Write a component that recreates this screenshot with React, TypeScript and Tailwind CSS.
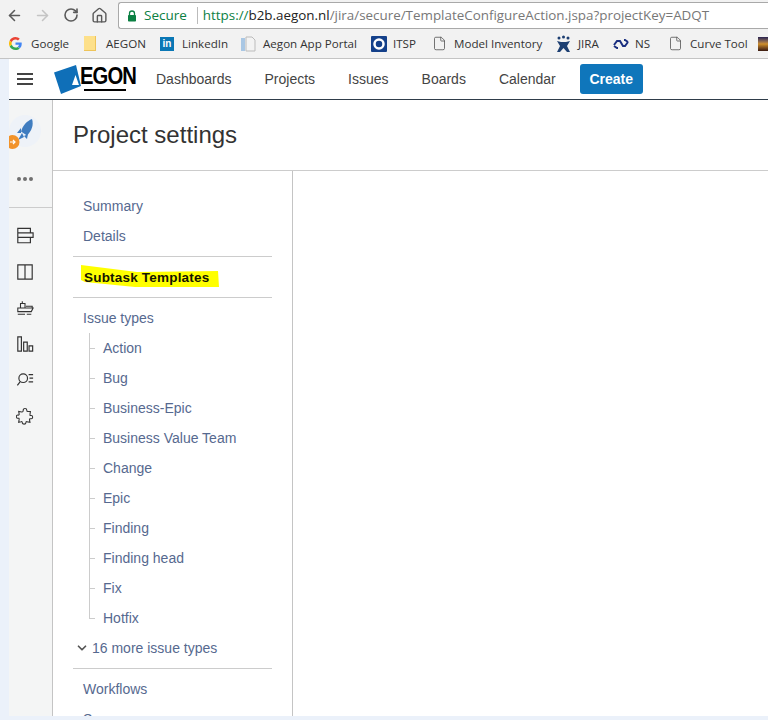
import { ArrowLeft, ArrowRight, RotateCw, Home, File, ChevronDown } from 'lucide-react';

const navLinks = ['Dashboards', 'Projects', 'Issues', 'Boards', 'Calendar'];
const issueTypes = ['Action', 'Bug', 'Business-Epic', 'Business Value Team', 'Change', 'Epic', 'Finding', 'Finding head', 'Fix', 'Hotfix'];

function GoogleIcon() {
  return (
    <svg width="13" height="13" viewBox="0 0 48 48">
      <path fill="#ea4335" d="M24 9.5c3.9 0 6.9 1.6 9 3.6l6.7-6.6C35.700 2.800 30.300 0 24 0 14.600 0 6.600 5.400 2.600 13.200l7.800 6.100C12.300 13.500 17.700 9.500 24 9.500z" />
      <path fill="#4285f4" d="M47 24.500c0-1.700-.2-3.300-.4-4.500H24v9h13c-.6 3-2.200 5.400-4.800 7.100l7.500 5.800C44.300 37.700 47 31.700 47 24.500z" />
      <path fill="#fbbc05" d="M10.400 28.700A14.500 14.500 0 0 1 10.400 19.300L2.600 13.200a24 24 0 0 0 0 21.600z" />
      <path fill="#34a853" d="M24 48c6.300 0 11.700-2.100 15.700-5.700l-7.500-5.800c-2.100 1.400-4.800 2.300-8.200 2.300-6.300 0-11.700-4-13.600-9.800l-7.800 6C6.600 42.600 14.600 48 24 48z" />
    </svg>
  );
}

function DocIcon() {
  return <File size={15} strokeWidth={1.3} className="text-[#555]" />;
}

function Bookmark({ icon, label, width }: { icon: React.ReactNode; label: string; width: number }) {
  return (
    <div className="flex items-center shrink-0" style={{ width }}>
      <div className="w-[22px] flex items-center">{icon}</div>
      <span className="whitespace-nowrap">{label}</span>
    </div>
  );
}

function BrowserChrome() {
  return (
    <div className="bg-[#f2f2f2] font-['Open_Sans',sans-serif]">
      <div className="h-[30px] flex items-center pl-[6px] text-[#5a5a5a]">
        <ArrowLeft size={17} strokeWidth={2.2} />
        <ArrowRight size={17} strokeWidth={2.2} className="ml-[11px] text-[#c4c4c4]" />
        <RotateCw size={16} strokeWidth={2.4} className="ml-[12px]" />
        <Home size={17} strokeWidth={2} className="ml-[12px]" />
        <div className="ml-[10px] flex-1 h-[27px] mt-[1px] bg-white border border-[#a9a9a9] border-r-0 rounded-l-[3px] flex items-center pl-[8px] text-[14px] whitespace-nowrap overflow-hidden">
          <svg width="10" height="12" viewBox="0 0 10 12" className="shrink-0">
            <path d="M2.500 5V3.500a2.500 2.500 0 0 1 5 0V5" fill="none" stroke="#0b8043" strokeWidth="1.300" />
            <rect x="1" y="5" width="8" height="6.500" rx="0.800" fill="#0b8043" />
          </svg>
          <span className="ml-[7px] text-[#0b8043] text-[13.5px]">Secure</span>
          <span className="ml-[10px] w-px h-[17px] bg-[#bbb]" />
          <span className="ml-[5px] text-[13.4px] text-[#777]">
            <span className="text-[#0b8043]">https://</span>
            <span className="text-[#222]">b2b.aegon.nl</span>
            /jira/secure/TemplateConfigureAction.jspa?projectKey=ADQT
          </span>
        </div>
      </div>
      <div className="h-[29px] flex items-center pl-[9px] text-[11.6px] text-[#333] border-b border-[#c4c4c4] overflow-hidden">
        <Bookmark width={75} label="Google" icon={<GoogleIcon />} />
        <Bookmark
          width={76}
          label="AEGON"
          icon={<div className="w-[12px] h-[15px] bg-[#fde08a] border-r border-b border-[#eec45a]" />}
        />
        <Bookmark
          width={81}
          label="LinkedIn"
          icon={<div className="w-[14px] h-[14px] bg-[#0a77b5] text-white text-[10px] font-bold leading-[14px] text-center font-['Liberation_Sans',sans-serif]">in</div>}
        />
        <Bookmark
          width={130}
          label="Aegon App Portal"
          icon={
            <svg width="15" height="16" viewBox="0 0 15 16">
              <rect x="0" y="2" width="4" height="13" fill="#a9c7e4" />
              <path d="M5 1h6l3 3v11H5z" fill="#f3f3f3" stroke="#bbb" />
            </svg>
          }
        />
        <Bookmark
          width={61}
          label="ITSP"
          icon={
            <svg width="16" height="16" viewBox="0 0 16 16">
              <rect width="16" height="16" rx="1" fill="#14408a" />
              <circle cx="8" cy="8" r="4.500" fill="none" stroke="#fff" strokeWidth="2.500" />
            </svg>
          }
        />
        <Bookmark width={124} label="Model Inventory" icon={<DocIcon />} />
        <Bookmark
          width={57}
          label="JIRA"
          icon={
            <svg width="15" height="18" viewBox="0 0 15 18" fill="#1d3f72">
              <circle cx="3" cy="3" r="1.500" />
              <circle cx="7.500" cy="2" r="1.500" />
              <circle cx="12" cy="3" r="1.500" />
              <path d="M1 6l4 1h5l4-1-3 5 3 6h-3l-3.500-4L4 17H1l3-6z" />
            </svg>
          }
        />
        <Bookmark
          width={55}
          label="NS"
          icon={
            <svg width="16" height="10" viewBox="0 0 16 10" fill="none" stroke="#1a2f80" strokeWidth="2">
              <path d="M1 6l3-4h3l3 5h2l3-4" />
              <path d="M1 7l3 2h1M15 3l-3-2h-1" />
            </svg>
          }
        />
        <Bookmark width={90} label="Curve Tool" icon={<DocIcon />} />
        <div className="w-[14px] h-[14px] shrink-0 bg-gradient-to-b from-[#2a2250] via-[#d0902a] to-[#3a1a10]" />
      </div>
    </div>
  );
}

function JiraHeader() {
  return (
    <div className="h-[41px] shrink-0 bg-white border-b border-[#2f3d4a] flex items-center font-['Liberation_Sans',sans-serif] text-[14px] text-[#444]">
      <div className="ml-[8px] w-[16px] flex flex-col gap-[3px]">
        <div className="h-[2px] bg-[#444]" />
        <div className="h-[2px] bg-[#444]" />
        <div className="h-[2px] bg-[#444]" />
      </div>
      <div className="relative ml-[21px] flex items-center w-[82px] h-[30px]">
        <svg width="28" height="30" viewBox="0 0 28 30" className="shrink-0">
          <path d="M0 8.500L22 1l5 21-20 8z" fill="#0f6fb8" />
          <path d="M18 21l3.500-10L25 21z" fill="#fff" />
        </svg>
        <span className="-ml-[2px] -mt-[6px] text-[23px] leading-none font-bold text-black tracking-[-1px] scale-x-[0.88] origin-left">EGON</span>
        <div className="absolute left-[30px] top-[25px] w-[42px] h-[2px] bg-black" />
      </div>
      <div className="ml-[20px] flex items-center gap-[33px]">
        {navLinks.map((link) => (
          <span key={link}>{link}</span>
        ))}
      </div>
      <button className="ml-[24px] w-[63px] h-[30px] rounded-[3px] bg-[#0f76bb] text-white font-bold">Create</button>
    </div>
  );
}

function Rail() {
  return (
    <div className="w-[44px] shrink-0 bg-[#f4f5f5] border-r border-[#c4c4c4] overflow-hidden">
      <div className="h-[108px] border-b border-[#ccc] flex flex-col pt-[15px]">
        <svg width="44" height="36" viewBox="0 0 44 36" className="shrink-0">
          <circle cx="16" cy="16" r="16" fill="#eef2f8" />
          <path d="M23 4c2 6-.5 12-5 16.500l-6-4C14 10 18 6 23 4z" fill="#3f7cc0" />
          <path d="M12 13l-4 5 4 0zM19 19l-1 5-3-3zM13 18l-4 7 6-3z" fill="#3f7cc0" />
          <circle cx="3.500" cy="27" r="7" fill="#f2932a" />
          <path d="M1 27h5M4 25l2 2-2 2" stroke="#fff" strokeWidth="1.200" fill="none" />
        </svg>
        <div className="mt-[26px] ml-[8px] flex gap-[2px]">
          <div className="w-[4px] h-[4px] rounded-full bg-[#707070]" />
          <div className="w-[4px] h-[4px] rounded-full bg-[#707070]" />
          <div className="w-[4px] h-[4px] rounded-full bg-[#707070]" />
        </div>
      </div>
      <div className="flex flex-col pl-[7px] pt-[19px] gap-[18px] text-[#333]">
        <svg width="18" height="18" viewBox="0 0 20 20" fill="none" stroke="currentColor" strokeWidth="1.300">
          <path d="M2 1.500h14v5H2zM2 6.500h17v5H2zM2 11.500h14v6H2z" />
        </svg>
        <svg width="18" height="18" viewBox="0 0 20 20" fill="none" stroke="currentColor" strokeWidth="1.300">
          <path d="M2 2h16v16H2zM10 2v16" />
        </svg>
        <svg width="18" height="18" viewBox="0 0 20 20" fill="none" stroke="currentColor" strokeWidth="1.200">
          <path d="M5 5h5v5H5zM7 5V2.500M2 10h17l-2 4H2zM2 17h8M12 17h5M11 8h7v2" />
        </svg>
        <svg width="18" height="18" viewBox="0 0 20 20" fill="none" stroke="currentColor" strokeWidth="1.300">
          <path d="M2 2h4v16H2zM8.500 8h4v10h-4zM14.500 12h4v6h-4z" />
        </svg>
        <svg width="18" height="18" viewBox="0 0 20 20" fill="none" stroke="currentColor" strokeWidth="1.300">
          <circle cx="8" cy="8" r="4.800" />
          <path d="M4.500 12L1.500 16M14 4h5M15 8h4M14 12h5" />
        </svg>
        <svg width="18" height="18" viewBox="0 0 20 20" fill="none" stroke="currentColor" strokeWidth="1.200">
          <path d="M8 3.500c0-2.500 4-2.500 4 0 0 1 .5 1.500 1 1.500h3l-.5 3.500c-.2 1 .8 1 1.500 1 2 0 2 3.500 0 3.500-1 0-2-.3-2 1l.5 3-3.500-.7c-1-.2-1 .7-1 1.200 0 2-4 2-4 0 0-1-.3-1.500-1.300-1.200L3 17l.5-3.500c.1-1-.5-1.200-1.200-1-2.500.5-2.500-4 0-3.500.8.200 1.400-.2 1.200-1.200L3 5l3.500.5c1 .1 1.500-.7 1.500-2z" />
        </svg>
      </div>
    </div>
  );
}

function SideNav() {
  const link = 'h-[30px] flex items-center pl-[30px]';
  const divider = 'ml-[20px] w-[199px] h-px bg-[#ccc]';
  return (
    <div className="w-[240px] shrink-0 border-r border-[#c4c4c4] pt-[20px] text-[14px] text-[#56698f] whitespace-nowrap">
      <div className={link}>Summary</div>
      <div className={link}>Details</div>
      <div className={`${divider} mt-[5px]`} />
      <div className="relative h-[40px] flex items-center pt-[2px] pl-[31px] font-bold text-[13.500px] text-[#141400] tracking-[0.2px]">
        <svg width="140" height="24" viewBox="0 0 140 24" className="absolute left-[28px] top-[8px]">
          <path d="M0 0l56 7 81-1 1 16-84 0-50-5-4-2z" fill="#ffff00" />
        </svg>
        <span className="relative">Subtask Templates</span>
      </div>
      <div className={divider} />
      <div className={`${link} mt-[5px]`}>Issue types</div>
      <div>
        {issueTypes.map((t, i) => {
          const last = i === issueTypes.length - 1;
          return (
            <div key={t} className="relative h-[30px] flex items-center pl-[50px]">
              <span className={`absolute left-[36px] top-0 w-px bg-[#ccc] ${last ? 'h-[15px]' : 'h-[30px]'}`} />
              <span className="absolute left-[36px] top-[15px] w-[6px] h-px bg-[#ccc]" />
              {t}
            </div>
          );
        })}
      </div>
      <div className="h-[30px] flex items-center pl-[22px]">
        <ChevronDown size={14} strokeWidth={3} className="text-[#555]" />
        <span className="ml-[3px]">16 more issue types</span>
      </div>
      <div className={`${divider} mt-[5px]`} />
      <div className={`${link} mt-[5px]`}>Workflows</div>
      <div className={link}>Screens</div>
    </div>
  );
}

export default function App() {
  return (
    <div className="w-[768px] h-[720px] overflow-hidden bg-[#ebf1fa] flex flex-col">
      <BrowserChrome />
      <div className="ml-[9px] h-[657px] flex flex-col bg-white overflow-hidden">
        <JiraHeader />
        <div className="flex-1 flex min-h-0">
          <Rail />
          <div className="flex-1 flex flex-col min-w-0 font-['Liberation_Sans',sans-serif]">
            <div className="h-[71px] shrink-0 border-b border-[#ccc] flex items-center pl-[20px] text-[24px] text-[#333]">
              Project settings
            </div>
            <div className="flex-1 flex min-h-0 overflow-hidden">
              <SideNav />
              <div className="flex-1" />
            </div>
          </div>
        </div>
      </div>
    </div>
  );
}
